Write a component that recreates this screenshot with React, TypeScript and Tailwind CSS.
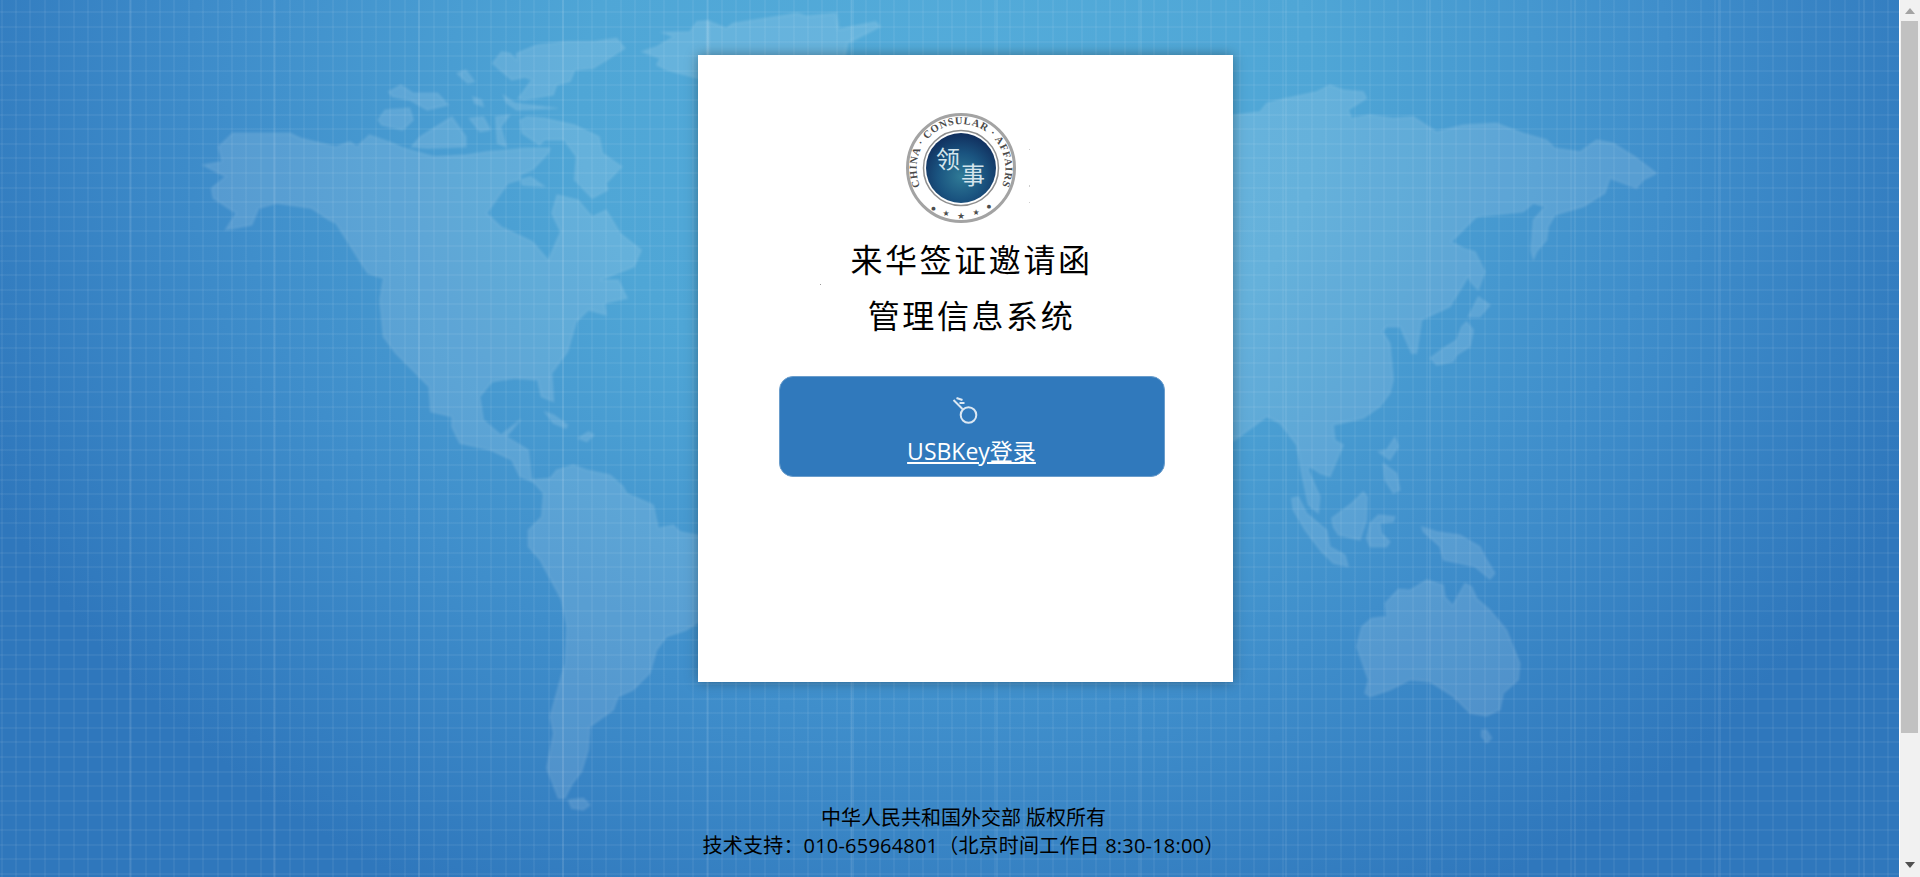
const northAmerica =
  "195,290 235,250 400,250 430,265 530,290 570,275 590,290 625,255 680,275 725,295 760,305 810,320 900,315 960,305 1020,300 1070,295 1140,295 1135,310 1090,360 1055,375 1060,405 1125,410 1085,380 1020,400 960,490 1000,530 1090,575 1135,630 1170,545 1145,490 1160,435 1220,450 1260,500 1300,480 1340,550 1400,600 1380,650 1285,690 1335,690 1360,745 1295,760 1300,795 1250,780 1215,815 1190,905 1145,970 1150,1055 1115,1040 1105,990 1040,985 975,995 940,1040 950,1110 1000,1155 1055,1110 1016,1160 1078,1200 1088,1295 1054,1280 1031,1230 969,1200 883,1180 860,1130 860,1100 800,1085 795,1010 700,910 665,860 655,750 665,685 620,670 530,520 510,510 460,475 360,460 310,475 290,525 215,540 245,490 180,445 175,415 215,380 150,345 205,335";

const arcticIslands = [
  "650,210 670,180 740,175 750,210 720,240 660,225",
  "680,125 715,105 750,130 820,130 850,165 790,180 740,150 690,140",
  "770,260 860,200 900,260 900,290 790,295 745,290",
  "875,70 900,60 925,95 905,100",
  "920,140 945,150 950,170 925,160",
  "910,205 950,200 970,240 940,245",
  "985,200 1025,195 1000,230 1015,290 990,280",
  "1055,210 1075,200 1125,205 1210,225 1280,260 1290,310 1345,350 1300,400 1305,420 1260,445 1210,390 1215,320 1180,270 1125,270 1110,285 1060,250",
  "1125,1085 1150,1095 1190,1125 1185,1135 1150,1120",
  "1220,1165 1250,1145 1265,1155 1245,1175",
];

const northTop = [
  "97,190 125,155 150,160 170,180 170,160 230,135 320,125 400,125 470,115 495,145 440,180 400,205 345,210 330,245 290,255 280,285 190,300 175,295 215,240 195,232 155,240 120,210",
  "130,285 165,310 290,325 170,330 140,310",
  "605,97 690,95 710,65 745,62 745,240 713,235 620,210 590,195 600,175 545,155 590,140 640,110",
];

const greenlandTop =
  "235,62 275,85 290,70 430,40 450,48 515,40 520,88 600,65 610,80 540,130 535,165 500,260 235,260";

const asia =
  "-10,170 15,165 90,155 110,130 170,115 260,95 300,75 340,90 400,95 410,115 355,150 365,175 420,165 490,175 550,170 580,190 620,215 700,195 800,190 880,220 950,240 975,265 1050,275 1100,240 1150,250 1215,290 1280,340 1240,360 1220,385 1140,355 1125,400 1060,440 975,465 955,500 950,540 920,575 910,600 903,570 910,480 945,440 910,430 880,455 740,470 665,545 700,565 735,575 765,635 745,690 725,670 715,650 660,740 575,780 560,880 545,880 510,800 470,800 458,815 480,850 490,960 480,1000 450,1040 400,1075 310,1095 315,1140 340,1155 300,1250 270,1240 240,1220 235,1230 270,1310 265,1360 235,1335 215,1240 200,1155 150,1090 110,1070 70,1100 15,1140 -10,1150";

const eastAsiaIslands = [
  "745,710 780,735 750,770 715,770",
  "710,785 730,810 720,860 680,885 670,905 620,915 600,895 640,865 680,840 695,800",
];

const oceania = [
  "495,140 505,170 480,210 445,185 470,180",
  "460,220 500,250 510,300 490,310 465,270",
  "185,325 205,320 230,370 290,420 300,470 345,495 355,530 310,520 270,480 225,420 190,360",
  "305,385 365,340 400,305 412,320 410,390 390,450 325,435 310,410",
  "420,400 445,375 495,380 490,395 450,400 455,430 480,455 470,470 420,470 410,445",
  "575,410 620,425 690,435 750,470 765,500 795,550 780,568 735,530 640,510 630,470 580,425",
  "380,770 395,710 425,685 470,680 465,640 505,598 540,600 590,570 640,585 645,620 668,645 705,580 725,590 740,625 780,660 830,720 870,820 865,870 820,910 810,960 770,978 720,970 670,920 600,875 540,870 480,900 420,920 405,910 415,870",
  "755,1020 770,1020 785,1045 770,1058 755,1040",
];

const southAmerica = [
  "275,150 330,145 350,120 400,105 440,120 510,135 550,170 560,190 640,225 655,295 700,285 720,305 800,320 800,560 740,600 680,620 650,660 630,730 580,780 535,800 520,840 450,890 445,960 425,1025 395,1065 375,1105 355,1105 320,1015 340,910 330,860 375,700 380,590 365,510 300,390 265,350 265,300 305,260 310,190",
  "385,1110 430,1105 450,1125 430,1140 395,1135",
];

function WorldMap() {
  return (
    <svg className="absolute inset-0 blur-[1px]" width="1899" height="877" viewBox="0 0 1899 877">
      <g fill="#fff" fillOpacity="0.125" stroke="#fff" strokeOpacity="0.05" strokeLinejoin="round">
        <g transform="translate(150 50) scale(0.3509 0.3333)" strokeWidth="9">
          <polygon points={northAmerica} />
          {arcticIslands.map((p) => (
            <polygon key={p} points={p} />
          ))}
        </g>
        <g transform="translate(460 0) scale(0.3333)" strokeWidth="9">
          {northTop.map((p) => (
            <polygon key={p} points={p} />
          ))}
        </g>
        <g transform="translate(600 0) scale(0.459 0.3333)" strokeWidth="9">
          <polygon points={greenlandTop} />
        </g>
        <g transform="translate(1230 60) scale(0.3333)" strokeWidth="9">
          <polygon points={asia} />
          {eastAsiaIslands.map((p) => (
            <polygon key={p} points={p} />
          ))}
        </g>
        <g transform="translate(1230 390) scale(0.3333)" strokeWidth="9">
          {oceania.map((p) => (
            <polygon key={p} points={p} />
          ))}
        </g>
        <g transform="translate(440 430) scale(0.3333)" strokeWidth="9">
          {southAmerica.map((p) => (
            <polygon key={p} points={p} />
          ))}
        </g>
      </g>
    </svg>
  );
}

function Logo() {
  return (
    <svg width="112" height="112" viewBox="0 0 112 112">
      <defs>
        <radialGradient id="seal" cx="50%" cy="62%" r="60%">
          <stop offset="0%" stopColor="#2f7a96" />
          <stop offset="55%" stopColor="#1a5480" />
          <stop offset="100%" stopColor="#11305f" />
        </radialGradient>
        <path id="ring" d="M 15.5 75 A 44.5 44.5 0 1 1 96.5 75" />
      </defs>
      <circle cx="56" cy="56" r="53.5" fill="#fff" stroke="#a3a3a3" strokeWidth="3" />
      <circle cx="56" cy="56" r="37.5" fill="none" stroke="#8e8e8e" strokeWidth="1.5" />
      <circle cx="56" cy="56" r="35" fill="url(#seal)" />
      <text fontFamily="'Liberation Serif', serif" fontWeight="700" fontSize="10.5" fill="#4a4a4a" letterSpacing="0.8">
        <textPath href="#ring" startOffset="50%" textAnchor="middle">
          CHINA · CONSULAR · AFFAIRS
        </textPath>
      </text>
      <g fontFamily="'Noto Sans CJK SC', sans-serif" fontWeight="400" fill="#d3e4ec" fontSize="24">
        <text x="31" y="56">领</text>
        <text x="56" y="72">事</text>
      </g>
      <g fontFamily="'DejaVu Sans', sans-serif" fill="#4d4d4d" textAnchor="middle">
        <text x="28.5" y="98" fontSize="5">●</text>
        <text x="41" y="104" fontSize="8">★</text>
        <text x="56" y="107" fontSize="9">★</text>
        <text x="71" y="103" fontSize="8">★</text>
        <text x="84" y="96" fontSize="5">●</text>
      </g>
    </svg>
  );
}

function KeyIcon() {
  return (
    <svg width="28" height="30" viewBox="0 0 28 30" fill="none" stroke="#dce8f3" strokeWidth="2">
      <circle cx="18.5" cy="20" r="7.8" />
      <path d="M12.5 14 L3.5 5 M6.5 3 L12.5 5 M9.5 8 L14.5 8" />
    </svg>
  );
}

function Scrollbar() {
  return (
    <aside className="w-[21px] h-[877px] shrink-0 bg-[#f1f1f1] border-l border-white flex flex-col">
      <div className="h-[21px] flex items-center justify-center">
        <svg width="10" height="6" viewBox="0 0 10 6">
          <polygon points="5,0 10,6 0,6" fill="#a3a3a3" />
        </svg>
      </div>
      <div className="h-[712px] w-[17px] ml-px bg-[#c1c1c1]" />
      <div className="flex-1 flex items-end justify-center pb-[9px]">
        <svg width="10" height="6" viewBox="0 0 10 6">
          <polygon points="0,0 10,0 5,6" fill="#505050" />
        </svg>
      </div>
    </aside>
  );
}

export default function App() {
  return (
    <div className="flex h-[877px] w-full overflow-hidden">
      <main className="relative flex-1 h-[877px] overflow-hidden bg-[radial-gradient(ellipse_1060px_900px_at_950px_110px,#54acda_0%,#4fa6d6_35%,#3f8ecb_68%,#2f77bc_100%)]">
        <WorldMap />
        <div className="absolute inset-0 bg-[repeating-linear-gradient(90deg,transparent_0,transparent_0.6px,rgba(255,255,255,0.05)_0.6px,rgba(255,255,255,0.05)_2.6px,transparent_2.6px,transparent_14.4px),repeating-linear-gradient(0deg,transparent_0,transparent_2.3px,rgba(255,255,255,0.05)_2.3px,rgba(255,255,255,0.05)_4.3px,transparent_4.3px,transparent_14.6px)]" />
        <div className="absolute inset-0 bg-[repeating-linear-gradient(90deg,transparent_0,transparent_129px,rgba(255,255,255,0.07)_129px,rgba(255,255,255,0.07)_131px,transparent_131px,transparent_144.5px)]" />

        <div className="relative flex flex-col items-center pt-[55px] font-['Open_Sans','Noto_Sans_CJK_SC',sans-serif]">
          <section className="relative ml-[32px] w-[535px] h-[627px] bg-white shadow-[0_0_12px_rgba(0,0,0,0.35)] flex flex-col items-center pt-[57px]">
            <span className="absolute left-[331px] top-[94px] w-px h-px bg-[#cfcfcf]" />
            <span className="absolute left-[331px] top-[130px] w-px h-[2px] bg-[#cfcfcf]" />
            <span className="absolute left-[331px] top-[147px] w-px h-px bg-[#cfcfcf]" />
            <span className="absolute left-[122px] top-[229px] w-px h-px bg-[#9a9a9a]" />
            <div className="mr-[9px] h-[112px]">
              <Logo />
            </div>
            <h1 className="mt-[6px] ml-[12px] text-[32px] leading-[56px] font-normal tracking-[2.6px] text-black font-['Noto_Sans_CJK_SC',sans-serif]">
              来华签证邀请函
            </h1>
            <h2 className="ml-[12px] text-[32px] leading-[56px] font-normal tracking-[2.6px] text-black font-['Noto_Sans_CJK_SC',sans-serif]">
              管理信息系统
            </h2>
            <a
              href="#"
              className="mt-[34px] ml-[12px] w-[386px] h-[101px] rounded-[14px] bg-[#3079bc] border border-[#6a9dcc] flex flex-col items-center pt-[18px] text-white"
            >
              <span className="mr-[15px] h-[30px]">
                <KeyIcon />
              </span>
              <span className="mt-[11px] text-[23px] leading-[30px] underline">USBKey登录</span>
            </a>
          </section>
          <footer className="mt-[122px] ml-[28px] text-center text-[20px] leading-[28px] text-black">
            <p>中华人民共和国外交部 版权所有</p>
            <p className="tracking-[0.2px]">技术支持：010-65964801（北京时间工作日 8:30-18:00）</p>
          </footer>
        </div>
      </main>
      <Scrollbar />
    </div>
  );
}
